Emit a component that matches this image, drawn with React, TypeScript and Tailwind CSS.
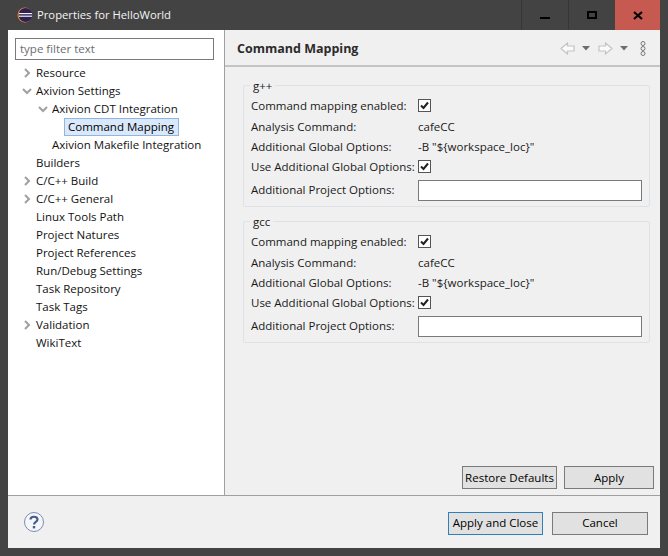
const font = { fontFamily: '"Open Sans", "Noto Sans", sans-serif' };

function Chevron({ open }: { open?: boolean }) {
  return (
    <svg width="10" height="10" viewBox="0 0 10 10" className="shrink-0">
      <polyline
        points={open ? "1,3 5,7 9,3" : "3,1 7,5 3,9"}
        fill="none"
        stroke="#a0a0a0"
        strokeWidth="2"
      />
    </svg>
  );
}

const tree = [
  { label: "Resource", indent: 22, arrow: "right" },
  { label: "Axivion Settings", indent: 22, arrow: "down" },
  { label: "Axivion CDT Integration", indent: 38, arrow: "down" },
  { label: "Command Mapping", indent: 54, selected: true },
  { label: "Axivion Makefile Integration", indent: 38 },
  { label: "Builders", indent: 22 },
  { label: "C/C++ Build", indent: 22, arrow: "right" },
  { label: "C/C++ General", indent: 22, arrow: "right" },
  { label: "Linux Tools Path", indent: 22 },
  { label: "Project Natures", indent: 22 },
  { label: "Project References", indent: 22 },
  { label: "Run/Debug Settings", indent: 22 },
  { label: "Task Repository", indent: 22 },
  { label: "Task Tags", indent: 22 },
  { label: "Validation", indent: 22, arrow: "right" },
  { label: "WikiText", indent: 22 },
];

function TreeRow({ item }: { item: (typeof tree)[number] }) {
  const pad =
    item.indent === 22 ? "pl-[14px]" : item.indent === 38 ? "pl-[30px]" : "pl-[46px]";
  return (
    <div className={`h-[18px] flex items-center whitespace-nowrap ${pad}`}>
      <span className="w-[14px] shrink-0 flex items-center">
        {item.arrow && <Chevron open={item.arrow === "down"} />}
      </span>
      {item.selected ? (
        <span className="ml-[-4px] w-[115px] h-[18px] pl-[3px] flex items-center bg-[#d9e9fb] border border-[#8fb6dd] text-black">
          {item.label}
        </span>
      ) : (
        <span>{item.label}</span>
      )}
    </div>
  );
}

function Check() {
  return (
    <span className="w-[13px] h-[13px] border border-[#555] bg-white flex items-center justify-center">
      <svg width="11" height="11" viewBox="0 0 11 11">
        <polyline points="2,5.5 4.5,8 9,2.5" fill="none" stroke="#222" strokeWidth="2" />
      </svg>
    </span>
  );
}

function Group({ title, last }: { title: string; last?: boolean }) {
  return (
    <div
      className={`relative w-[407px] h-[122px] ml-[18px] border border-[#dde2e8] rounded-[2px] pl-[7px] pt-[9px] whitespace-nowrap ${last ? "" : "mb-[14px]"}`}
    >
      <span className="absolute left-[6px] top-[-7px] px-[3px] h-[14px] leading-[14px] bg-[#f0f0f0]">
        {title}
      </span>
      <div className="h-[21px] flex items-center">
        <span className="w-[167px]">Command mapping enabled:</span>
        <Check />
      </div>
      <div className="h-[21px] flex items-center">
        <span className="w-[167px]">Analysis Command:</span>
        <span>cafeCC</span>
      </div>
      <div className="h-[19px] flex items-center">
        <span className="w-[167px]">Additional Global Options:</span>
        <span>-B "${"{"}workspace_loc{"}"}"</span>
      </div>
      <div className="h-[21px] flex items-center">
        <span className="w-[167px]">Use Additional Global Options:</span>
        <Check />
      </div>
      <div className="h-[26px] flex items-center">
        <span className="w-[167px]">Additional Project Options:</span>
        <span className="w-[224px] h-[21px] bg-white border border-[#7a7a7a]" />
      </div>
    </div>
  );
}

function Btn({ label, w, primary }: { label: string; w: string; primary?: boolean }) {
  return (
    <button
      className={`${w} h-[23px] bg-[#e1e1e1] border ${primary ? "border-[#2f7fb8]" : "border-[#7a7a7a]"} flex items-center justify-center text-black whitespace-nowrap`}
    >
      {label}
    </button>
  );
}

function NavArrow({ flip }: { flip?: boolean }) {
  return (
    <svg width="15" height="13" viewBox="0 0 15 13" className={flip ? "" : "-scale-x-100"}>
      <polygon
        points="1,4 7.5,4 7.5,1 14,6.5 7.5,12 7.5,9 1,9"
        fill="#fafafa"
        stroke="#c4c4c4"
        strokeWidth="1.2"
      />
    </svg>
  );
}

function Caret() {
  return (
    <svg width="8" height="5" viewBox="0 0 8 5">
      <polygon points="0,0 8,0 4,4.5" fill="#6e6e6e" />
    </svg>
  );
}

export default function App() {
  return (
    <div className="w-[668px] h-[556px] bg-[#434343] flex flex-col text-[11.5px] text-[#1a1a1a] overflow-hidden" style={font}>
      {/* Title bar */}
      <div className="h-[30px] shrink-0 flex items-stretch">
        <div className="flex-1 flex items-center pl-[17px] text-white">
          <svg width="16" height="16" viewBox="0 0 16 16" className="mr-[4px]">
            <circle cx="8" cy="8" r="7.5" fill="#e8872b" />
            <circle cx="8.6" cy="8" r="7" fill="#2c2255" />
            <rect x="2" y="6" width="13" height="1.2" fill="#f2f2f2" />
            <rect x="2" y="8.6" width="13" height="1.2" fill="#f2f2f2" />
          </svg>
          <span className="text-[11.25px] text-[#f5f5f5]">Properties for HelloWorld</span>
        </div>
        <div className="w-[47px] border-l border-[#363636] flex items-center justify-center">
          <span className="w-[10px] h-[2px] mt-[6px] bg-black" />
        </div>
        <div className="w-[47px] border-l border-[#363636] flex items-center justify-center">
          <span className="w-[10px] h-[8px] border-2 border-black" />
        </div>
        <div className="w-[45px] mr-[8px] bg-[#c75a50] flex items-center justify-center">
          <svg width="10" height="9" viewBox="0 0 10 9">
            <path d="M1 1 L9 8 M9 1 L1 8" stroke="#000" strokeWidth="2.2" />
          </svg>
        </div>
      </div>

      {/* Client */}
      <div className="flex-1 mx-[8px] mb-[8px] bg-[#f0f0f0] flex flex-col min-h-0">
        <div className="flex-1 flex min-h-0">
          {/* Left tree */}
          <div className="w-[217px] shrink-0 bg-white border-r border-[#a0a0a0] pt-[8px]">
            <div className="ml-[7px] w-[199px] h-[22px] border border-[#7a7a7a] flex items-center pl-[4px] text-[#6d6d6d]">
              type filter text
            </div>
            <div className="mt-[4px] text-[#111]">
              {tree.map((item) => (
                <TreeRow key={item.label} item={item} />
              ))}
            </div>
          </div>

          {/* Right panel */}
          <div className="flex-1 flex flex-col min-w-0">
            <div className="h-[37px] shrink-0 border-b-2 border-[#c4c4c4] flex items-center pl-[12px] pr-[14px] bg-[#f0f0f0]">
              <span className="text-[12.5px] font-bold text-[#2b2b2b] mt-[4px]">Command Mapping</span>
              <div className="ml-auto flex items-center mt-[2px]">
                <NavArrow />
                <span className="ml-[7px]"><Caret /></span>
                <span className="ml-[8px]"><NavArrow flip /></span>
                <span className="ml-[7px]"><Caret /></span>
                <svg width="6" height="15" viewBox="0 0 6 15" className="ml-[12px]">
                  <circle cx="3" cy="2.5" r="2" fill="none" stroke="#777" />
                  <circle cx="3" cy="7.5" r="2" fill="none" stroke="#777" />
                  <circle cx="3" cy="12.5" r="2" fill="none" stroke="#777" />
                </svg>
              </div>
            </div>
            <div className="flex-1 pt-[18px] flex flex-col">
              <Group title="g++" />
              <Group title="gcc" last />
              <div className="mt-auto mb-[6px] flex justify-end gap-[7px] pr-[6px]">
                <Btn label="Restore Defaults" w="w-[95px]" />
                <Btn label="Apply" w="w-[90px]" />
              </div>
            </div>
          </div>
        </div>

        {/* Footer */}
        <div className="h-[53px] shrink-0 border-t border-[#a0a0a0] flex items-center pl-[15px] pr-[12px]">
          <svg width="22" height="22" viewBox="0 0 22 22">
            <circle cx="11" cy="11" r="9.5" fill="#f4f6fa" stroke="#7d8db0" strokeWidth="1" />
            <path d="M7.5 8.5 C7.5 4.8 14.5 4.8 14.5 8.5 C14.5 11 11 10.8 11 13.5" fill="none" stroke="#475c8c" strokeWidth="2.2" />
            <rect x="9.8" y="15" width="2.4" height="2.4" fill="#475c8c" />
          </svg>
          <div className="ml-auto flex gap-[9px] mt-[2px]">
            <Btn label="Apply and Close" w="w-[95px]" primary />
            <Btn label="Cancel" w="w-[96px]" />
          </div>
        </div>
      </div>
    </div>
  );
}
